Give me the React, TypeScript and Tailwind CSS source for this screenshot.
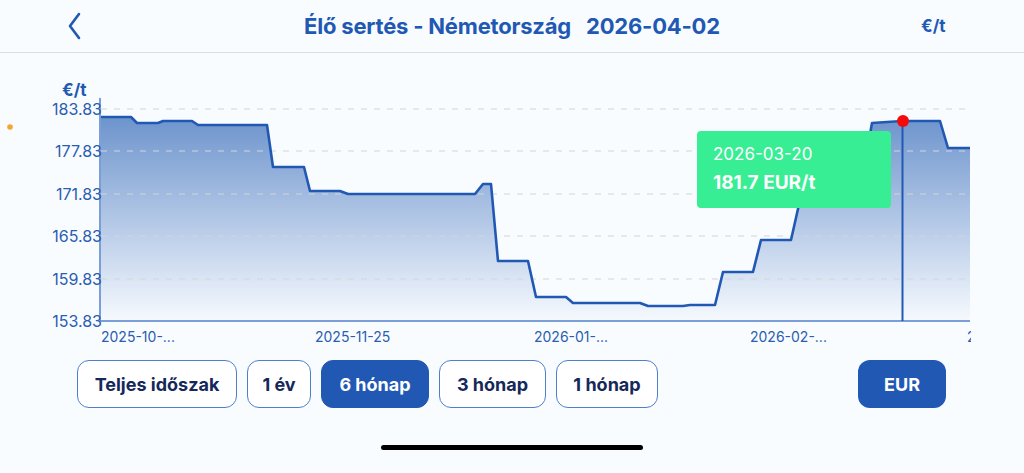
import React from 'react';

const BLUE = '#2158b4';

// price line, in page coordinates
const PTS: [number, number][] = [
  [101, 117], [131, 117], [137, 123], [158, 123], [163, 121], [192, 121], [198, 125], [267, 125],
  [273, 167], [304, 167], [310, 191], [340, 191], [348, 194], [475, 194], [483, 184], [491, 184],
  [498, 261], [528, 261], [536, 297], [566, 297], [573, 303], [640, 303], [648, 306], [683, 306],
  [690, 305], [715, 305], [723, 272], [753, 272], [761, 240], [791, 240], [800, 200], [830, 200],
  [838, 168], [864, 168], [872, 123], [902, 121], [940, 121], [948, 148], [970, 148],
];

const Y_TICKS = [
  { v: '183.83', y: 109 }, { v: '177.83', y: 151 }, { v: '171.83', y: 194 },
  { v: '165.83', y: 236 }, { v: '159.83', y: 279 }, { v: '153.83', y: 321 },
];

const X_TICKS = [
  { t: '2025-10-...', x: 101 }, { t: '2025-11-25', x: 315 }, { t: '2026-01-...', x: 534 },
  { t: '2026-02-...', x: 750 }, { t: '2', x: 967 },
];

const RANGES = [
  { label: 'Teljes időszak', w: 'w-[160px]' },
  { label: '1 év', w: 'w-[64px]' },
  { label: '6 hónap', w: 'w-[108px]', active: true },
  { label: '3 hónap', w: 'w-[107px]' },
  { label: '1 hónap', w: 'w-[102px]' },
];

function Chart() {
  const line = PTS.map(([x, y], i) => `${i ? 'L' : 'M'}${x} ${y}`).join(' ');
  const area = `${line} L970 321 L101 321 Z`;
  return (
    <svg width="1024" height="297" viewBox="0 53 1024 297" className="block">
      <defs>
        <linearGradient id="fill" x1="0" y1="0" x2="0" y2="1">
          <stop offset="0" stopColor="#6d94cd" />
          <stop offset="1" stopColor="#f6fafe" />
        </linearGradient>
        <clipPath id="plot">
          <rect x="0" y="53" width="971" height="297" />
        </clipPath>
      </defs>
      <circle cx="10" cy="127" r="2.8" fill="#f6a530" />
      <text x="62" y="96" fontSize="17" fontWeight="700" fill={BLUE}>€/t</text>
      <path d={area} fill="url(#fill)" />
      {Y_TICKS.slice(0, 5).map(t => (
        <line key={t.v} x1="101" x2="968" y1={t.y} y2={t.y} stroke="#d3d5d8" strokeWidth="1" strokeDasharray="6 7" />
      ))}
      <line x1="100" x2="100" y1="98" y2="321" stroke="#4f7fcb" strokeWidth="1.5" />
      <line x1="100" x2="970" y1="321" y2="321" stroke="#4f7fcb" strokeWidth="1.5" />
      <path d={line} fill="none" stroke={BLUE} strokeWidth="2.6" strokeLinejoin="round" />
      <line x1="902.5" x2="902.5" y1="121" y2="321" stroke={BLUE} strokeWidth="2" />
      <circle cx="903" cy="121" r="6" fill="#f50a0a" />
      {Y_TICKS.map(t => (
        <text key={t.v} x="102" y={t.y + 6} textAnchor="end" fontSize="16" fill="#2b5db2">{t.v}</text>
      ))}
      <g clipPath="url(#plot)">
        {X_TICKS.map(t => (
          <text key={t.t} x={t.x} y="342" fontSize="14" fill="#2b5db2">{t.t}</text>
        ))}
      </g>
    </svg>
  );
}

export default function App() {
  return (
    <div className="w-[1024px] h-[473px] bg-[#f8fcfe] flex flex-col overflow-hidden" style={{ fontFamily: 'Inter, "Noto Sans", sans-serif' }}>
      <div className="h-[53px] shrink-0 border-b border-[#dadfe2] flex items-center relative">
        <svg width="24" height="32" viewBox="0 0 24 32" className="absolute left-[63px] top-[10px]">
          <path d="M16 4 L7 16 L16 28" fill="none" stroke={BLUE} strokeWidth="2.6" strokeLinecap="round" strokeLinejoin="round" />
        </svg>
        <div className="w-full text-center text-[22px] font-bold text-[#2158b4] tracking-[-0.2px] whitespace-pre">
          Élő sertés - Németország   2026-04-02
        </div>
        <span className="absolute left-[921px] top-[14px] text-[17px] font-bold text-[#2158b4]">€/t</span>
      </div>

      <div className="relative h-[297px] shrink-0">
        <Chart />
        <div className="absolute left-[697px] top-[78px] w-[194px] h-[77px] rounded-[4px] bg-[#38ee94] pl-[16px] pt-[12px] text-white">
          <div className="text-[17px] leading-[22px]">2026-03-20</div>
          <div className="text-[19px] leading-[26px] font-bold mt-[5px]">181.7 EUR/t</div>
        </div>
      </div>

      <div className="h-[58px] shrink-0 flex items-center pl-[77px] pt-[10px]">
        <div className="flex gap-[10px]">
          {RANGES.map(r => (
            <div
              key={r.label}
              className={`${r.w} h-[48px] rounded-[12px] flex items-center justify-center text-[18px] font-bold border-[1.5px] ${
                r.active ? 'bg-[#2158b4] border-[#2158b4] text-white' : 'bg-white border-[#4f7fcb] text-[#15285a]'
              }`}
            >
              {r.label}
            </div>
          ))}
        </div>
        <div className="ml-auto mr-[78px] w-[88px] h-[48px] rounded-[12px] bg-[#2158b4] text-white text-[18px] font-bold flex items-center justify-center">
          EUR
        </div>
      </div>

      <div className="flex-1 flex items-center justify-center">
        <div className="w-[262px] h-[5px] rounded-full bg-black mt-[14px]" />
      </div>
    </div>
  );
}
